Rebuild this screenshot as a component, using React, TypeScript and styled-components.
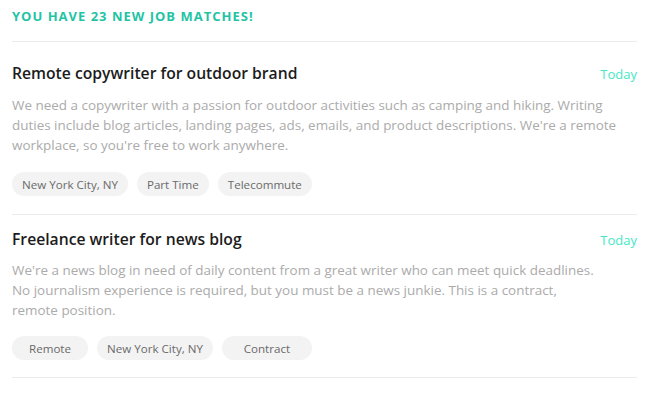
import React from "react";
import styled, { createGlobalStyle } from "styled-components";

const GlobalStyle = createGlobalStyle`
  html, body {
    margin: 0;
    padding: 0;
    background: #ffffff;
    font-family: "Open Sans", "Noto Sans", sans-serif;
  }
`;

const Page = styled.div`
  width: 625px;
  padding: 0 13px 0 12px;
`;

const Heading = styled.div`
  color: #1fc4a4;
  font-size: 13px;
  font-weight: 700;
  letter-spacing: 1px;
  line-height: 18px;
  padding: 7px 0 16px;
  border-bottom: 1px solid #ececec;
`;

const TitleRow = styled.div`
  display: flex;
  justify-content: space-between;
  align-items: baseline;
`;

const Title = styled.div`
  color: #1c1c1c;
  font-size: 15.7px;
  font-weight: 600;
  line-height: 24px;
`;

const When = styled.div`
  color: #45e8c4;
  font-size: 13px;
  line-height: 20px;
`;

const Description = styled.p<{ $max: number }>`
  margin: 10px 0 0;
  max-width: ${(p) => p.$max}px;
  color: #ababab;
  font-size: 13.45px;
  line-height: 20px;
`;

const Tags = styled.div`
  display: flex;
  gap: 9px;
  margin-top: 17px;
`;

const Job = styled.div`
  padding: 12px 0 17px;
  border-bottom: 1px solid #ececec;

  ${Heading} + & {
    padding: 19px 0 18px;
  }

  & + & ${Description} {
    margin-top: 9px;
  }

  & + & ${Tags} {
    margin-top: 16px;
  }
`;

const Tag = styled.span<{ $min?: number }>`
  display: inline-flex;
  align-items: center;
  justify-content: center;
  height: 24px;
  padding: 0 10px;
  min-width: ${(p) => (p.$min ? `${p.$min}px` : "auto")};
  box-sizing: border-box;
  border-radius: 12px;
  background: #f3f3f3;
  color: #6a6a6a;
  font-size: 11.6px;
`;

type TagInfo = { label: string; min?: number };

const jobs: { title: string; text: string; max: number; tags: TagInfo[] }[] = [
  {
    title: "Remote copywriter for outdoor brand",
    text:
      "We need a copywriter with a passion for outdoor activities such as camping and hiking. Writing duties include blog articles, landing pages, ads, emails, and product descriptions. We're a remote workplace, so you're free to work anywhere.",
    max: 620,
    tags: [{ label: "New York City, NY" }, { label: "Part Time" }, { label: "Telecommute" }],
  },
  {
    title: "Freelance writer for news blog",
    text:
      "We're a news blog in need of daily content from a great writer who can meet quick deadlines. No journalism experience is required, but you must be a news junkie. This is a contract, remote position.",
    max: 591,
    tags: [
      { label: "Remote", min: 76 },
      { label: "New York City, NY" },
      { label: "Contract", min: 90 },
    ],
  },
];

export default function App() {
  return (
    <>
      <GlobalStyle />
      <Page>
        <Heading>YOU HAVE 23 NEW JOB MATCHES!</Heading>
        {jobs.map((job) => (
          <Job key={job.title}>
            <TitleRow>
              <Title>{job.title}</Title>
              <When>Today</When>
            </TitleRow>
            <Description $max={job.max}>{job.text}</Description>
            <Tags>
              {job.tags.map((t) => (
                <Tag key={t.label} $min={t.min}>
                  {t.label}
                </Tag>
              ))}
            </Tags>
          </Job>
        ))}
      </Page>
    </>
  );
}
